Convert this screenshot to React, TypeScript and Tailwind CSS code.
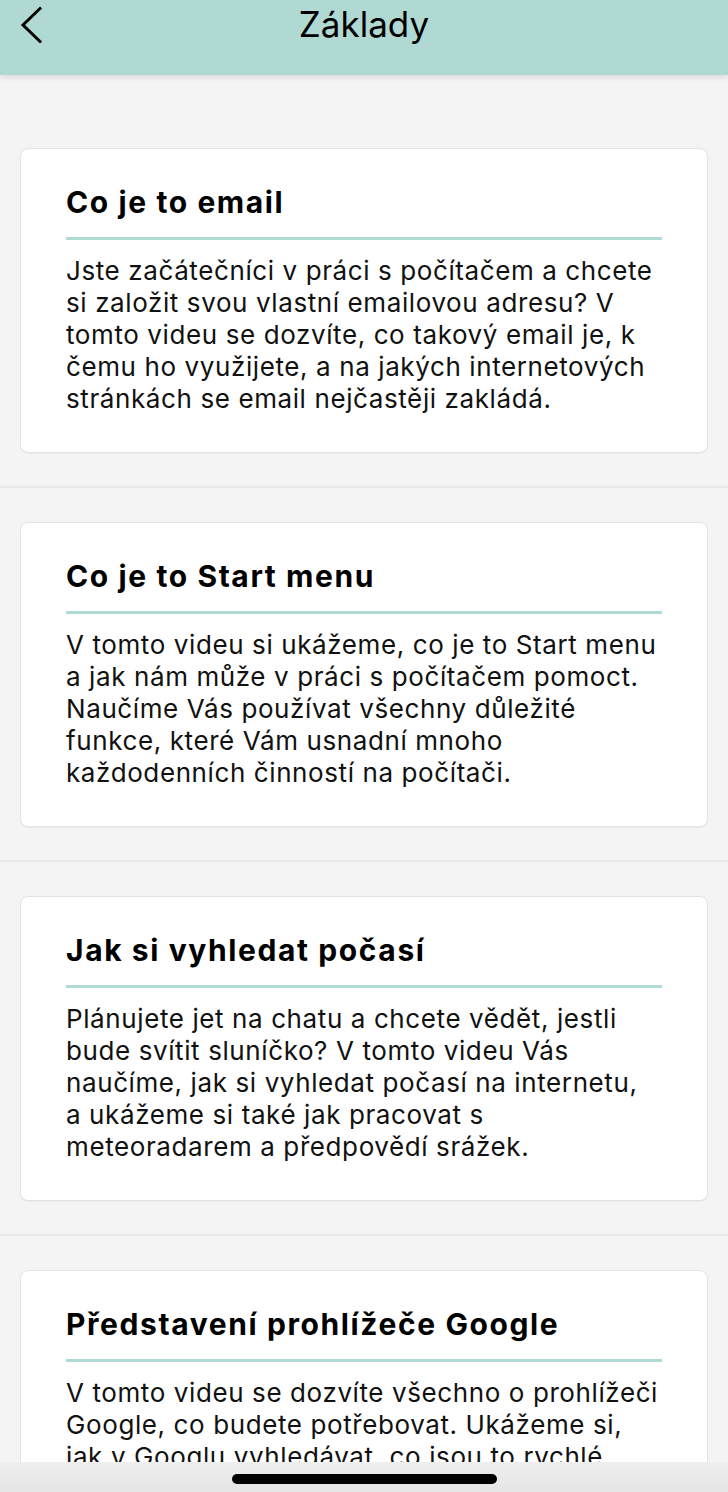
import React from "react";

const items: { title: string; lines: string[] }[] = [
  {
    title: "Co je to email",
    lines: [
      "Jste začátečníci v práci s počítačem a chcete",
      "si založit svou vlastní emailovou adresu? V",
      "tomto videu se dozvíte, co takový email je, k",
      "čemu ho využijete, a na jakých internetových",
      "stránkách se email nejčastěji zakládá.",
    ],
  },
  {
    title: "Co je to Start menu",
    lines: [
      "V tomto videu si ukážeme, co je to Start menu",
      "a jak nám může v práci s počítačem pomoct.",
      "Naučíme Vás používat všechny důležité",
      "funkce, které Vám usnadní mnoho",
      "každodenních činností na počítači.",
    ],
  },
  {
    title: "Jak si vyhledat počasí",
    lines: [
      "Plánujete jet na chatu a chcete vědět, jestli",
      "bude svítit sluníčko? V tomto videu Vás",
      "naučíme, jak si vyhledat počasí na internetu,",
      "a ukážeme si také jak pracovat s",
      "meteoradarem a předpovědí srážek.",
    ],
  },
  {
    title: "Představení prohlížeče Google",
    lines: [
      "V tomto videu se dozvíte všechno o prohlížeči",
      "Google, co budete potřebovat. Ukážeme si,",
      "jak v Googlu vyhledávat, co jsou to rychlé",
      "odkazy a jak si nastavit domovskou stránku",
      "podle svých představ.",
    ],
  },
];

function Card({ title, lines }: { title: string; lines: string[] }) {
  return (
    <div className="bg-white border border-[#e3e3e3] rounded-[8px] shadow-[0_1px_1px_rgba(0,0,0,0.04)] px-[45px] pt-[36px] pb-[37px]">
      <div className="text-[30px] leading-[34px] font-bold text-black tracking-[1.6px] whitespace-nowrap">
        {title}
      </div>
      <div className="mt-[18px] h-[3px] bg-[#b0dad5]" />
      <div className="mt-[15px] text-[26px] leading-[32px] text-[#111] tracking-[0.6px]">
        {lines.map((l, i) => (
          <div key={i} className="whitespace-nowrap">
            {l}
          </div>
        ))}
      </div>
    </div>
  );
}

export default function App() {
  return (
    <div
      className="relative w-[728px] h-[1492px] overflow-hidden bg-[#f4f4f4]"
      style={{ fontFamily: "Inter, 'Noto Sans', sans-serif" }}
    >
      <header className="relative z-10 h-[75px] bg-[#b0d9d4] shadow-[0_2px_6px_rgba(0,0,0,0.12)]">
        <div className="relative flex h-[48px] items-center justify-center">
          <svg
            className="absolute left-[18px] top-[5px]"
            width="28"
            height="40"
            viewBox="0 0 28 40"
            fill="none"
          >
            <path
              d="M22 3.5 L5 20 L22 36.5"
              stroke="#000"
              strokeWidth="3"
              strokeLinecap="square"
              strokeLinejoin="miter"
            />
          </svg>
          <div className="text-[35px] leading-[42px] text-black font-normal">Základy</div>
        </div>
      </header>

      <main className="pt-[73px]">
        {items.map((it, i) => (
          <section
            key={i}
            className={
              "px-[20px] pb-[33px] " +
              (i > 0 ? "pt-[34px] " : "") +
              "border-b-2 border-[#e8e8e8]"
            }
          >
            <Card title={it.title} lines={it.lines} />
          </section>
        ))}
      </main>

      <div className="absolute bottom-0 left-0 right-0 h-[30px] bg-gradient-to-b from-[#efefef] to-[#e5e5e5] flex justify-center">
        <div className="mt-[12px] h-[10px] w-[265px] rounded-full bg-black" />
      </div>
    </div>
  );
}
